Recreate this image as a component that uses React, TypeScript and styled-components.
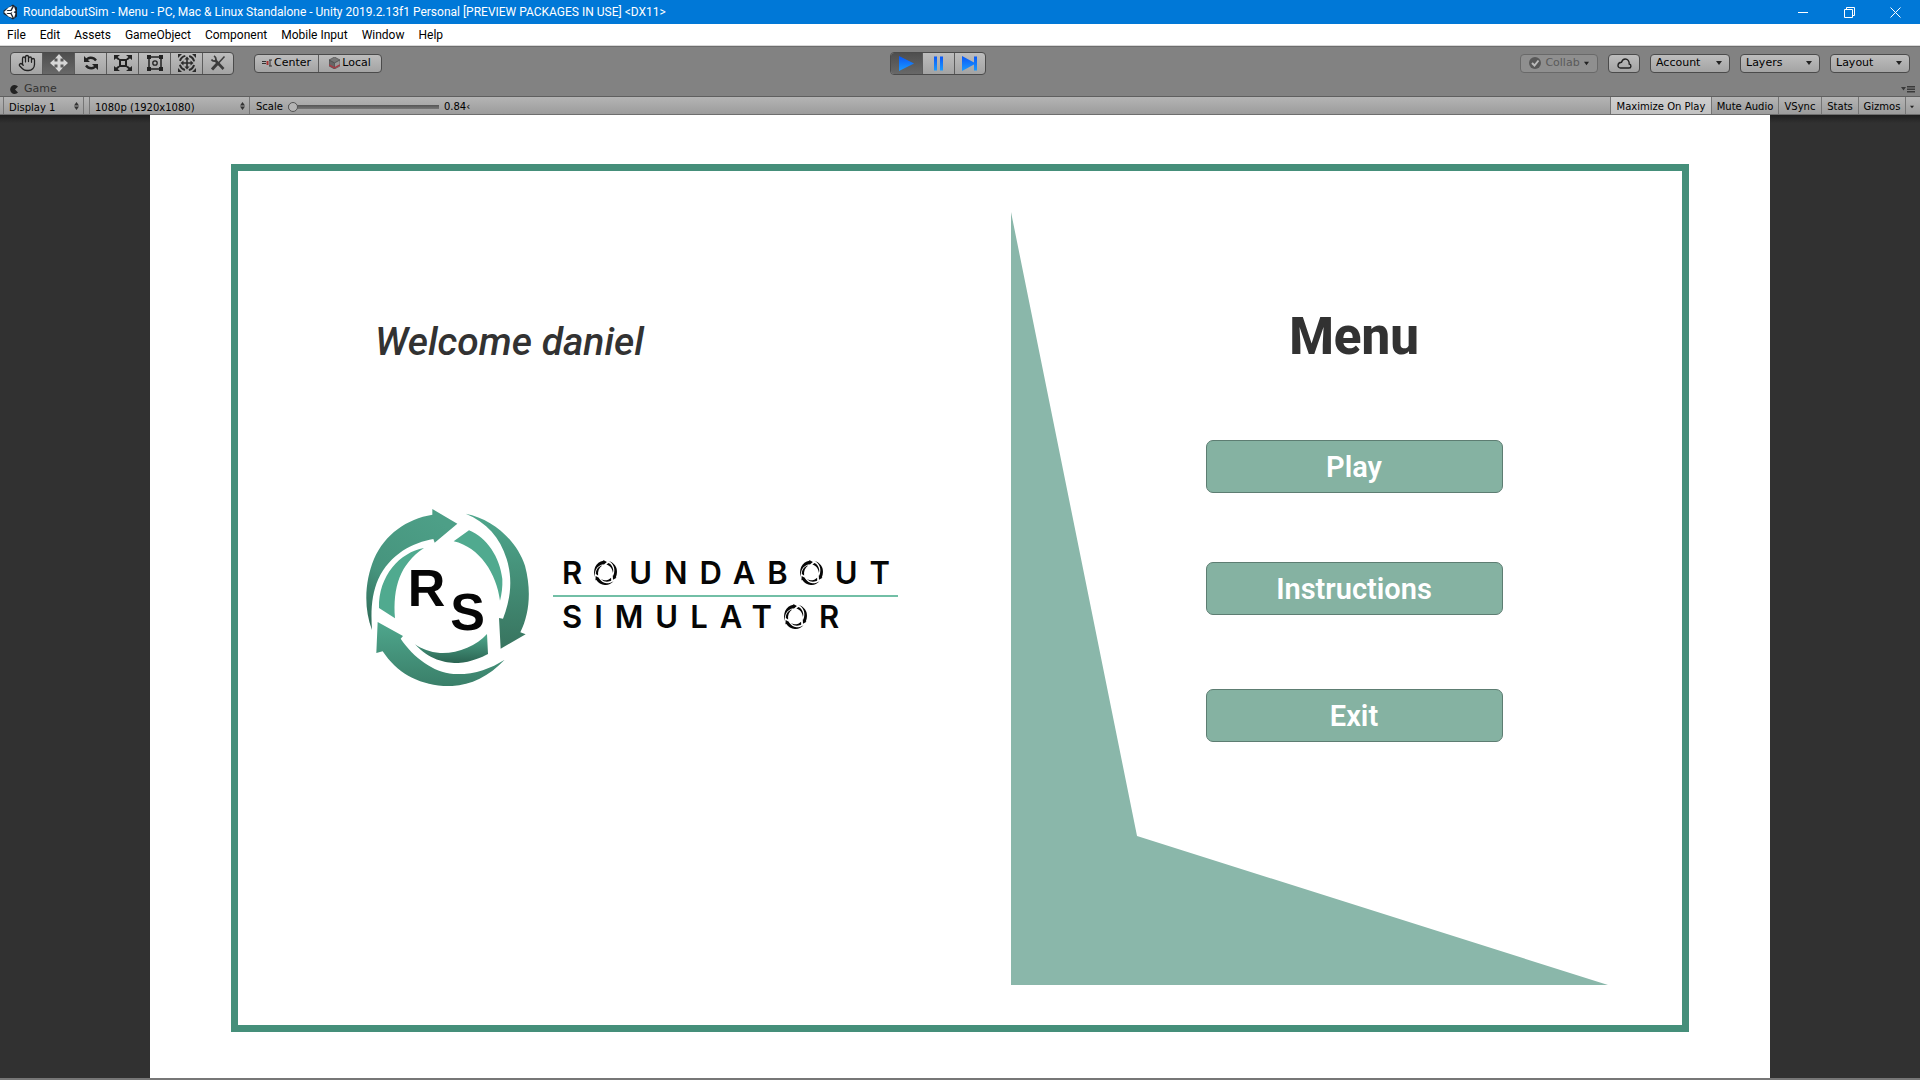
import React from "react";
import styled, { createGlobalStyle, css } from "styled-components";
import { Hand } from "lucide-react";

const uiFont = `"DejaVu Sans", "Liberation Sans", sans-serif`;
const systemFont = `Roboto, "Open Sans", sans-serif`;
const gameFont = `Roboto, "Liberation Sans", sans-serif`;

const GlobalStyle = createGlobalStyle`
  *, *::before, *::after { box-sizing: border-box; }
  body { margin: 0; background: #828282; }
  button, select, input { font: inherit; color: inherit; margin: 0; padding: 0; border: 0; background: none; }
  svg { display: block; flex: none; }
`;

const Window = styled.div`
  display: flex;
  flex-direction: column;
  min-height: 100vh;
  background: #828282;
  color: #000;
`;

const TitleBar = styled.header`
  display: flex;
  align-items: center;
  height: 24px;
  padding-left: 3px;
  background: #0078d7;
  color: #fff;
  font: 12px/24px ${systemFont};
`;

const WindowTitle = styled.h1`
  flex: 1;
  margin: 0 0 0 6px;
  font: inherit;
  white-space: nowrap;
`;

const CaptionButton = styled.button`
  display: grid;
  place-items: center;
  width: 46px;
  height: 22px;
  &:last-child { margin-right: 2px; }
`;

const MenuBar = styled.nav`
  display: flex;
  align-items: center;
  gap: 14px;
  height: 22px;
  padding: 0 7px;
  background: #fff;
  border-bottom: 1px solid #d8d8d8;
  font: 12px/20px ${systemFont};
`;

const MenuItem = styled.button`
  white-space: nowrap;
`;

const Toolbar = styled.div`
  display: grid;
  grid-template-columns: 1fr 140px 1fr;
  align-items: center;
  height: 33px;
  padding: 0 10px;
  border-top: 1px solid #6c6c6c;
  font: 11px/16px ${uiFont};
`;

const ToolbarSide = styled.div<{ $end?: boolean }>`
  display: flex;
  align-items: center;
  gap: ${(p) => (p.$end ? 10 : 20)}px;
  justify-content: ${(p) => (p.$end ? "flex-end" : "flex-start")};
`;

const raised = css`
  border: 1px solid #4b4b4b;
  border-radius: 4px;
  background: linear-gradient(#bdbdbd, #a3a3a3);
`;

const Segments = styled.div<{ $tall?: boolean }>`
  ${raised}
  display: flex;
  width: max-content;
  height: ${(p) => (p.$tall ? 23 : 19)}px;
  overflow: hidden;
`;

const Segment = styled.button<{ $on?: boolean; $width: number }>`
  display: flex;
  align-items: center;
  justify-content: center;
  gap: 2px;
  width: ${(p) => p.$width}px;
  background: ${(p) => (p.$on ? "linear-gradient(#4e4e4e, #686868)" : "none")};
  & + & { border-left: 1px solid #5c5c5c; }
  &:first-child, &:last-child { width: ${(p) => p.$width - 1}px; }
`;

const ToolButton = styled.button<{ $width: number; $faded?: boolean }>`
  ${raised}
  display: flex;
  align-items: center;
  justify-content: center;
  gap: 4px;
  width: ${(p) => p.$width}px;
  height: 19px;
  ${(p) => p.$faded && css`
    background: #8f8f8f;
    border-color: #696969;
    color: #5a5a5a;
  `}
`;

const PickerBox = styled.div`
  ${raised}
  display: grid;
  grid-template-columns: 1fr 20px;
  align-items: center;
  width: 80px;
  height: 19px;
  & > * { grid-row: 1; }
  & > svg { grid-column: 2; justify-self: center; pointer-events: none; }
`;

const Picker = styled.select`
  grid-column: 1 / -1;
  appearance: none;
  width: 100%;
  height: 17px;
  padding-left: 5px;
  outline: none;
`;

const TabRow = styled.div`
  display: flex;
  align-items: center;
  justify-content: space-between;
  height: 17px;
  padding: 3px 5px 0 10px;
  color: #333;
  font: 11px/14px ${uiFont};
`;

const Tab = styled.button`
  display: flex;
  align-items: center;
  gap: 5px;
`;

const ViewBar = styled.div`
  display: flex;
  align-items: stretch;
  height: 19px;
  padding-left: 3px;
  border-top: 1px solid #5f5f5f;
  border-bottom: 1px solid #6e6e6e;
  background: linear-gradient(#b4b4b4, #9c9c9c);
  font: 10px/17px ${uiFont};
`;

const ViewPicker = styled.div<{ $width: number }>`
  display: grid;
  grid-template-columns: 1fr 9px;
  align-items: center;
  width: ${(p) => p.$width}px;
  border: solid #757575;
  border-width: 0 1px;
  & > * { grid-row: 1; }
  & > svg { grid-column: 2; pointer-events: none; }
  & + & { margin-left: 5px; }
  & select { padding: 2px 0 0 5px; }
`;

const ScaleField = styled.label`
  display: flex;
  align-items: center;
  gap: 5px;
  margin-left: 6px;
  padding-top: 2px;
`;

const ScaleSlider = styled.input`
  appearance: none;
  width: 151px;
  height: 11px;
  background: linear-gradient(#555, #777) center / 100% 4px no-repeat;
  border-radius: 2px;
  &::-webkit-slider-thumb {
    appearance: none;
    width: 10px;
    height: 10px;
    border: 1px solid #555;
    border-radius: 50%;
    background: #b4b4b4;
  }
`;

const ViewToggles = styled.div`
  display: flex;
  margin-left: auto;
  padding-right: 3px;
`;

const ViewToggle = styled.button<{ $on?: boolean; $width: number }>`
  width: ${(p) => p.$width}px;
  padding-top: 2px;
  border-left: 1px solid #757575;
  background: ${(p) => (p.$on ? "linear-gradient(#d0d0d0, #c2c2c2)" : "none")};
  white-space: nowrap;
  display: flex;
  align-items: center;
  justify-content: center;
`;

const Viewport = styled.main`
  flex: 1;
  display: flex;
  justify-content: center;
  background: linear-gradient(#1e1e1e, #313131 8px);
  border-bottom: 2px solid #777;
  font-family: ${gameFont};
`;

const Stage = styled.div`
  display: flex;
  width: 84.375%;
  padding: 49px 81px 46px;
  background: #fff;
`;

const Frame = styled.div`
  flex: 1;
  display: grid;
  grid-template-columns: 773fr 671fr;
  border: 7px solid #458f7a;
`;

const Intro = styled.section`
  padding: 147px 0 0 128px;
`;

const Welcome = styled.p`
  margin: 0 0 0 9px;
  color: #323232;
  font-size: 39px;
  font-style: italic;
  font-weight: 500;
  line-height: 48px;
  white-space: nowrap;
`;

const Brand = styled.div`
  display: flex;
  align-items: center;
  margin-top: 143px;
  gap: 24px;
`;

const Wordmark = styled.div`
  padding-bottom: 6px;
  color: #060606;
  font: 600 31px/32px Inter, "Liberation Sans", sans-serif;
  letter-spacing: 12px;
`;

const WordLine = styled.div`
  display: flex;
  align-items: center;
  height: 43px;
  padding: 0 0 1px 9px;
  width: 345px;
  white-space: nowrap;
  & > svg { margin-right: 12px; }
  & + & { border-top: 2px solid #72bfa6; }
`;

const MenuArea = styled.section`
  display: grid;
  & > * { grid-area: 1 / 1; }
`;

const Backdrop = styled.svg`
  width: 89%;
  height: 773px;
  margin-top: 41px;
`;

const MenuColumn = styled.div`
  display: flex;
  flex-direction: column;
  align-items: center;
  padding: 134px 0 0 15px;
`;

const MenuHeading = styled.h2`
  margin: 0 0 71px;
  color: #323232;
  font-size: 51px;
  font-weight: 800;
  line-height: 64px;
`;

const GameButton = styled.button<{ $above?: number }>`
  width: 297px;
  height: 53px;
  margin-top: ${(p) => p.$above ?? 0}px;
  padding-top: 2px;
  border: 1px solid #5d7d72;
  border-radius: 7px;
  background: #85b2a2;
  color: #fff;
  font-size: 29px;
  font-weight: 600;
  line-height: 49px;
`;

const DownArrow = ({ size = 6 }: { size?: number }) => (
  <svg width={size} height={size} viewBox="0 0 6 6"><path d="M0 1h6L3 5z" fill="#222" /></svg>
);

const UpDown = () => (
  <svg width="5" height="8" viewBox="0 0 5 8"><path d="M0 3.4L2.5 0 5 3.4zM0 4.6h5L2.5 8z" fill="#333" /></svg>
);

const UnityLogo = () => (
  <svg width="14" height="16" viewBox="0 0 28 32">
    <path d="M1 13L20 1l8 6v18l-8 6L1 20z" fill="#1b2530" />
    <path d="M2 16L11 7l8-3-4 8h-6l-2 2h8l6 0-6 4H7l2 2h6l4 8-8-3z" fill="#fff" />
    <path d="M22 5l3 9-4 2 4 3-3 9-5-10 2-2-2-2z" fill="#fff" />
  </svg>
);

const MoveIcon = () => (
  <svg width="18" height="18" viewBox="0 0 18 18" fill="#d6d6d6">
    <path d="M9 0l4 4.500h-2.500v3h3V5L18 9l-4.500 4v-2.500h-3v3H13L9 18l-4-4.500h2.500v-3h-3V13L0 9l4.500-4v2.500h3v-3H5z" />
  </svg>
);

const RotateIcon = () => (
  <svg width="16" height="16" viewBox="0 0 16 16" fill="none" stroke="#222" strokeWidth="2.4">
    <path d="M3 5.500C5 2 10 1.500 13 5.500M13 10.500C11 14 6 14.500 3 10.500" />
    <path d="M1 1v6h6zM15 15V9H9z" fill="#222" stroke="none" />
  </svg>
);

const ScaleIcon = () => (
  <svg width="18" height="16" viewBox="0 0 18 16" fill="none" stroke="#222" strokeWidth="2">
    <path d="M6 5h6v6H6zM2 2l3 2.500M16 2l-3 2.500M2 14l3-2.500M16 14l-3-2.500" />
    <path d="M0 0h6L0 5zM18 0h-6l6 5zM0 16h6l-6-5zM18 16h-6l6-5z" fill="#222" stroke="none" />
  </svg>
);

const RectIcon = () => (
  <svg width="18" height="18" viewBox="0 0 18 18" fill="none" stroke="#222">
    <path d="M3 3h12v12H3z" strokeWidth="1.500" />
    <circle cx="9" cy="9" r="2.200" strokeWidth="1.300" />
    <path d="M1 1h4v4H1zM13 1h4v4h-4zM1 13h4v4H1zM13 13h4v4h-4z" fill="#222" stroke="none" />
  </svg>
);

const TransformIcon = () => (
  <svg width="20" height="20" viewBox="0 0 20 20" fill="none" stroke="#2b2b2b">
    <circle cx="10" cy="10" r="7.300" strokeWidth="2" strokeDasharray="7.500 3.970" strokeDashoffset="-2" />
    <path d="M10 5v10M5 10h10" strokeWidth="1.600" />
    <path d="M10 3.500l2.500 3h-5zM10 16.500l2.500-3h-5zM3.500 10l3-2.500v5zM16.500 10l-3-2.500v5zM1 1h4L1 5zM19 1h-4l4 4zM1 19h4l-4-4zM19 19h-4l4-4z" fill="#2b2b2b" stroke="none" />
  </svg>
);

const CustomToolsIcon = () => (
  <svg width="16" height="16" viewBox="0 0 16 16" fill="none" stroke="#3c3c3c">
    <path d="M5 5l8.500 9" strokeWidth="2.600" />
    <path d="M1.500 4.500C3 7 6 6.500 6 4.500S5 1.500 4 1" strokeWidth="1.800" />
    <path d="M14.500 1.500L8.500 8" strokeWidth="1.500" />
    <path d="M7.500 8.500L2 14.500" strokeWidth="3" />
  </svg>
);

const CenterIcon = () => (
  <svg width="10" height="9" viewBox="0 0 10 9" fill="none">
    <path d="M0 2.500h4M0 4.500h4M7 1h3M7 7h3M8 1v6" stroke="#333" />
    <path d="M5.500 2v4" stroke="#a33" strokeWidth="2" />
  </svg>
);

const LocalIcon = () => (
  <svg width="11" height="12" viewBox="0 0 11 12">
    <path d="M5.500 0L11 3 5.500 6 0 3z" fill="#777" stroke="#444" strokeWidth=".6" />
    <path d="M0 3l5.500 3v6L0 9z" fill="#666" stroke="#444" strokeWidth=".6" />
    <path d="M11 3L5.500 6v6L11 9z" fill="#999" stroke="#444" strokeWidth=".6" />
    <path d="M0 8l5.500 3L11 8" fill="none" stroke="#a33b45" strokeWidth="1.500" />
  </svg>
);

const PlayIcon = ({ kind }: { kind: "play" | "pause" | "step" }) => (
  <svg width="16" height="15" viewBox="0 0 16 15">
    <defs>
      <linearGradient id={`glow-${kind}`} x2="0" y2="1">
        <stop stopColor="#0a56f5" />
        <stop offset="1" stopColor="#1b9bff" />
      </linearGradient>
    </defs>
    <path
      fill={`url(#glow-${kind})`}
      d={kind === "play" ? "M0 0l15 7.500L0 15z" : kind === "pause" ? "M3 0.500h3v14H3zM9 0.500h3v14H9z" : "M0 0l12 6.500V0.500h3v14H12V8.500L0 15z"}
    />
  </svg>
);

const CheckBadge = () => (
  <svg width="12" height="12" viewBox="0 0 12 12">
    <circle cx="6" cy="6" r="6" fill="#585858" />
    <path d="M3 6l2.500 2.500L9.500 3.500" fill="none" stroke="#bbb" strokeWidth="2" />
  </svg>
);

const CloudIcon = () => (
  <svg width="15" height="11" viewBox="0 0 15 11" fill="none" stroke="#222" strokeWidth="1.400">
    <path d="M3.500 10h8.500c2.500 0 2.600-3.600.2-4C12.500 3 10.500 1 8.300 1 6.200 1 5 2.500 4.500 4.300 0 4.500 0 10 3.500 10z" />
  </svg>
);

const arrows = [
  "M66 418C40 350 45 270 72 205C105 130 170 85 247 72L247 55L322 99L254 156L250 145C190 155 120 190 85 265C65 310 62 360 66 418Z",
  "M347 69C430 85 500 150 525 225C545 300 538 370 511 425L527 431L452 474L447 382L459 384C480 330 490 270 470 205C450 140 410 95 347 69Z",
  "M464 507C410 565 345 590 280 586C200 580 140 545 98 482L79 487L83 394L159 436L152 444C190 500 250 545 310 550C370 553 420 535 464 507Z",
];
const blades = [
  "M311 152L357 119C410 140 450 200 457 265C458 290 455 310 450 330C440 250 390 170 311 152Z",
  "M222 172C150 185 85 255 87 352L135 383C128 290 150 220 222 172Z",
  "M195 461C240 510 290 518 325 517C365 514 395 500 414 490L411 430C380 465 320 490 270 487C240 485 215 475 195 461Z",
];

const Emblem = () => (
  <svg width="163" height="177" viewBox="48 55 489 531" role="img" aria-label="RS">
    <defs>
      <linearGradient id="ringA" x1=".6" y1="0" x2=".1" y2="1">
        <stop stopColor="#4d9f87" /><stop offset=".6" stopColor="#46947d" /><stop offset="1" stopColor="#2f6b58" />
      </linearGradient>
      <linearGradient id="ringB" x2="0" y2="1">
        <stop stopColor="#4fa78d" /><stop offset="1" stopColor="#38745f" />
      </linearGradient>
      <linearGradient id="ringC" x2="0" y2="1">
        <stop stopColor="#4fa78d" /><stop offset="1" stopColor="#3a7f69" />
      </linearGradient>
      <linearGradient id="bladeC" x2="0" y2="1">
        <stop stopColor="#4fa98d" /><stop offset="1" stopColor="#2b6452" />
      </linearGradient>
    </defs>
    <path d={arrows[0]} fill="url(#ringA)" />
    <path d={arrows[1]} fill="url(#ringB)" />
    <path d={arrows[2]} fill="url(#ringC)" />
    <path d={blades[0]} fill="#50aa8f" />
    <path d={blades[1]} fill="#50aa8f" />
    <path d={blades[2]} fill="url(#bladeC)" />
    <g fontFamily="Liberation Sans, sans-serif" fontWeight="700" fontSize="156" fill="#060606">
      <text x="173" y="345">R</text>
      <text x="301" y="419">S</text>
    </g>
  </svg>
);

const RingO = () => (
  <svg width="23" height="25" viewBox="48 55 489 531" fill="#060606">
    {[...arrows, ...blades].map((d) => <path key={d} d={d} />)}
  </svg>
);

const menus = ["File", "Edit", "Assets", "GameObject", "Component", "Mobile Input", "Window", "Help"];

const tools = [
  { name: "Hand", icon: <Hand size={18} strokeWidth={1.7} color="#222" /> },
  { name: "Move", icon: <MoveIcon />, on: true },
  { name: "Rotate", icon: <RotateIcon /> },
  { name: "Scale", icon: <ScaleIcon /> },
  { name: "Rect", icon: <RectIcon /> },
  { name: "Transform", icon: <TransformIcon /> },
  { name: "Custom tools", icon: <CustomToolsIcon /> },
];

const toggles = [
  { name: "Maximize On Play", width: 101, on: true },
  { name: "Mute Audio", width: 67 },
  { name: "VSync", width: 43 },
  { name: "Stats", width: 37 },
  { name: "Gizmos", width: 47 },
];

export default function App() {
  return (
    <Window>
      <GlobalStyle />
      <TitleBar>
        <UnityLogo />
        <WindowTitle>
          RoundaboutSim - Menu - PC, Mac &amp; Linux Standalone - Unity 2019.2.13f1 Personal [PREVIEW PACKAGES IN USE] &lt;DX11&gt;
        </WindowTitle>
        <CaptionButton aria-label="Minimize">
          <svg width="10" height="10" viewBox="0 0 10 10"><path d="M0 5.500h10" stroke="#fff" /></svg>
        </CaptionButton>
        <CaptionButton aria-label="Restore">
          <svg width="11" height="11" viewBox="0 0 11 11" fill="none" stroke="#fff"><path d="M.5 2.500h8v8h-8zM2.500 2.500v-2h8v8h-2" /></svg>
        </CaptionButton>
        <CaptionButton aria-label="Close">
          <svg width="11" height="11" viewBox="0 0 11 11" stroke="#fff"><path d="M.5.5l10 10M10.500.5l-10 10" /></svg>
        </CaptionButton>
      </TitleBar>

      <MenuBar>
        {menus.map((m) => <MenuItem key={m}>{m}</MenuItem>)}
      </MenuBar>

      <Toolbar>
        <ToolbarSide>
          <Segments $tall>
            {tools.map((t) => (
              <Segment key={t.name} $width={32} $on={t.on} aria-label={t.name}>{t.icon}</Segment>
            ))}
          </Segments>
          <Segments>
            <Segment $width={64}><CenterIcon />Center</Segment>
            <Segment $width={64}><LocalIcon />Local</Segment>
          </Segments>
        </ToolbarSide>
        <Segments $tall>
          <Segment $width={32} $on aria-label="Play mode"><PlayIcon kind="play" /></Segment>
          <Segment $width={32} aria-label="Pause"><PlayIcon kind="pause" /></Segment>
          <Segment $width={32} aria-label="Step"><PlayIcon kind="step" /></Segment>
        </Segments>
        <ToolbarSide $end>
          <ToolButton $width={78} $faded><CheckBadge />Collab<DownArrow size={5} /></ToolButton>
          <ToolButton $width={32} aria-label="Services"><CloudIcon /></ToolButton>
          {["Account", "Layers", "Layout"].map((name) => (
            <PickerBox key={name}>
              <Picker aria-label={name}><option>{name}</option></Picker>
              <DownArrow />
            </PickerBox>
          ))}
        </ToolbarSide>
      </Toolbar>

      <TabRow>
        <Tab>
          <svg width="9" height="9" viewBox="0 0 9 9"><path d="M8 1.500A4.500 4.500 0 1 0 8 7.500L5 4.500z" fill="#222" /></svg>
          Game
        </Tab>
        <svg width="14" height="7" viewBox="0 0 14 7"><path d="M0 1h5L2.500 4.500zM6 0h8v1.500H6zM6 2.500h8V4H6zM6 5h8v1.500H6z" fill="#3a3a3a" /></svg>
      </TabRow>

      <ViewBar>
        <ViewPicker $width={81}>
          <Picker aria-label="Display"><option>Display 1</option></Picker>
          <UpDown />
        </ViewPicker>
        <ViewPicker $width={161}>
          <Picker aria-label="Resolution"><option>1080p (1920x1080)</option></Picker>
          <UpDown />
        </ViewPicker>
        <ScaleField>
          Scale
          <ScaleSlider type="range" min="0.84" max="5" step="0.01" defaultValue="0.84" />
          <output>0.84‹</output>
        </ScaleField>
        <ViewToggles>
          {toggles.map((t) => (
            <ViewToggle key={t.name} $width={t.width} $on={t.on}>{t.name}</ViewToggle>
          ))}
          <ViewToggle $width={12} aria-label="Gizmo options"><DownArrow size={4} /></ViewToggle>
        </ViewToggles>
      </ViewBar>

      <Viewport>
        <Stage>
          <Frame>
            <Intro>
              <Welcome>Welcome daniel</Welcome>
              <Brand>
                <Emblem />
                <Wordmark>
                  <WordLine>R<RingO />UNDAB<RingO />UT</WordLine>
                  <WordLine>SIMULAT<RingO />R</WordLine>
                </Wordmark>
              </Brand>
            </Intro>
            <MenuArea>
              <Backdrop viewBox="0 0 597 773" preserveAspectRatio="none">
                <path d="M0 0L126 624L597 773H0Z" fill="#8ab7aa" />
              </Backdrop>
              <MenuColumn>
                <MenuHeading>Menu</MenuHeading>
                <GameButton>Play</GameButton>
                <GameButton $above={69}>Instructions</GameButton>
                <GameButton $above={74}>Exit</GameButton>
              </MenuColumn>
            </MenuArea>
          </Frame>
        </Stage>
      </Viewport>
    </Window>
  );
}
